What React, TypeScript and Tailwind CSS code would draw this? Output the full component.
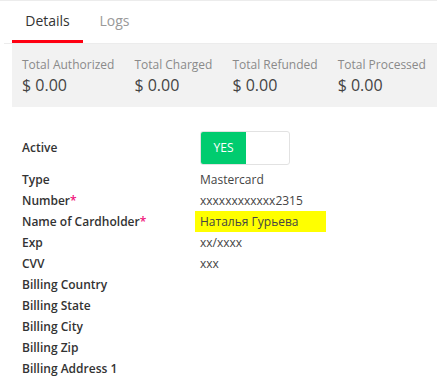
import React from 'react';

const stats = [
  { label: 'Total Authorized', value: '$ 0.00' },
  { label: 'Total Charged', value: '$ 0.00' },
  { label: 'Total Refunded', value: '$ 0.00' },
  { label: 'Total Processed', value: '$ 0.00' },
];

const rows: { label: string; value?: string; required?: boolean; highlight?: boolean }[] = [
  { label: 'Type', value: 'Mastercard' },
  { label: 'Number', value: 'xxxxxxxxxxxx2315', required: true },
  { label: 'Name of Cardholder', value: 'Наталья Гурьева', required: true, highlight: true },
  { label: 'Exp', value: 'xx/xxxx' },
  { label: 'CVV', value: 'xxx' },
  { label: 'Billing Country' },
  { label: 'Billing State' },
  { label: 'Billing City' },
  { label: 'Billing Zip' },
  { label: 'Billing Address 1' },
];

export default function App() {
  return (
    <div
      className="w-[437px] h-[389px] overflow-hidden bg-white border-t border-[#ececec]"
      style={{ fontFamily: '"Open Sans", "Noto Sans", sans-serif' }}
    >
      {/* tabs */}
      <div className="ml-[4px] flex border-b border-[#ececec] h-[43px]">
        <div className="ml-[8px] w-[71px] flex flex-col">
          <div className="flex-1 flex items-center justify-center text-[14px] text-[#333]">Details</div>
          <div className="h-[3px] bg-[#ff0011]" />
        </div>
        <div className="w-[63px] flex items-center justify-center text-[14px] text-[#999] pb-[3px]">Logs</div>
      </div>

      {/* totals */}
      <div className="ml-[12px] h-[63px] bg-[#f2f2f2] flex gap-[20px] pl-[10px] pt-[12px]">
        {stats.map((s) => (
          <div key={s.label} className="flex flex-col">
            <span className="text-[12px] leading-[17px] text-[#8a8a8a] whitespace-nowrap">{s.label}</span>
            <span className="text-[16px] leading-[24px] text-[#444]">{s.value}</span>
          </div>
        ))}
      </div>

      {/* details */}
      <div className="pl-[22px] pt-[23px]">
        <div className="flex items-center h-[35px]">
          <div className="w-[178px] text-[12px] font-semibold text-[#333]">Active</div>
          <div className="w-[90px] h-[34px] border border-[#e2e2e2] rounded-[3px] flex overflow-hidden">
            <div className="w-[45px] bg-[#00cc6f] flex items-center justify-center text-white text-[12px]">YES</div>
          </div>
        </div>
        <div className="mt-[4px] flex flex-col">
          {rows.map((r) => (
            <div key={r.label} className="flex items-center h-[21px] text-[12px]">
              <div className="w-[178px] font-semibold text-[#333] whitespace-nowrap">
                {r.label}
                {r.required && <span className="text-[#f0127a]">*</span>}
              </div>
              {r.value && (
                <div
                  className={
                    r.highlight
                      ? 'bg-[#ffff00] -ml-[5px] pl-[5px] w-[131px] h-[21px] flex items-center text-[#444]'
                      : 'text-[#444]'
                  }
                >
                  {r.value}
                </div>
              )}
            </div>
          ))}
        </div>
      </div>
    </div>
  );
}
